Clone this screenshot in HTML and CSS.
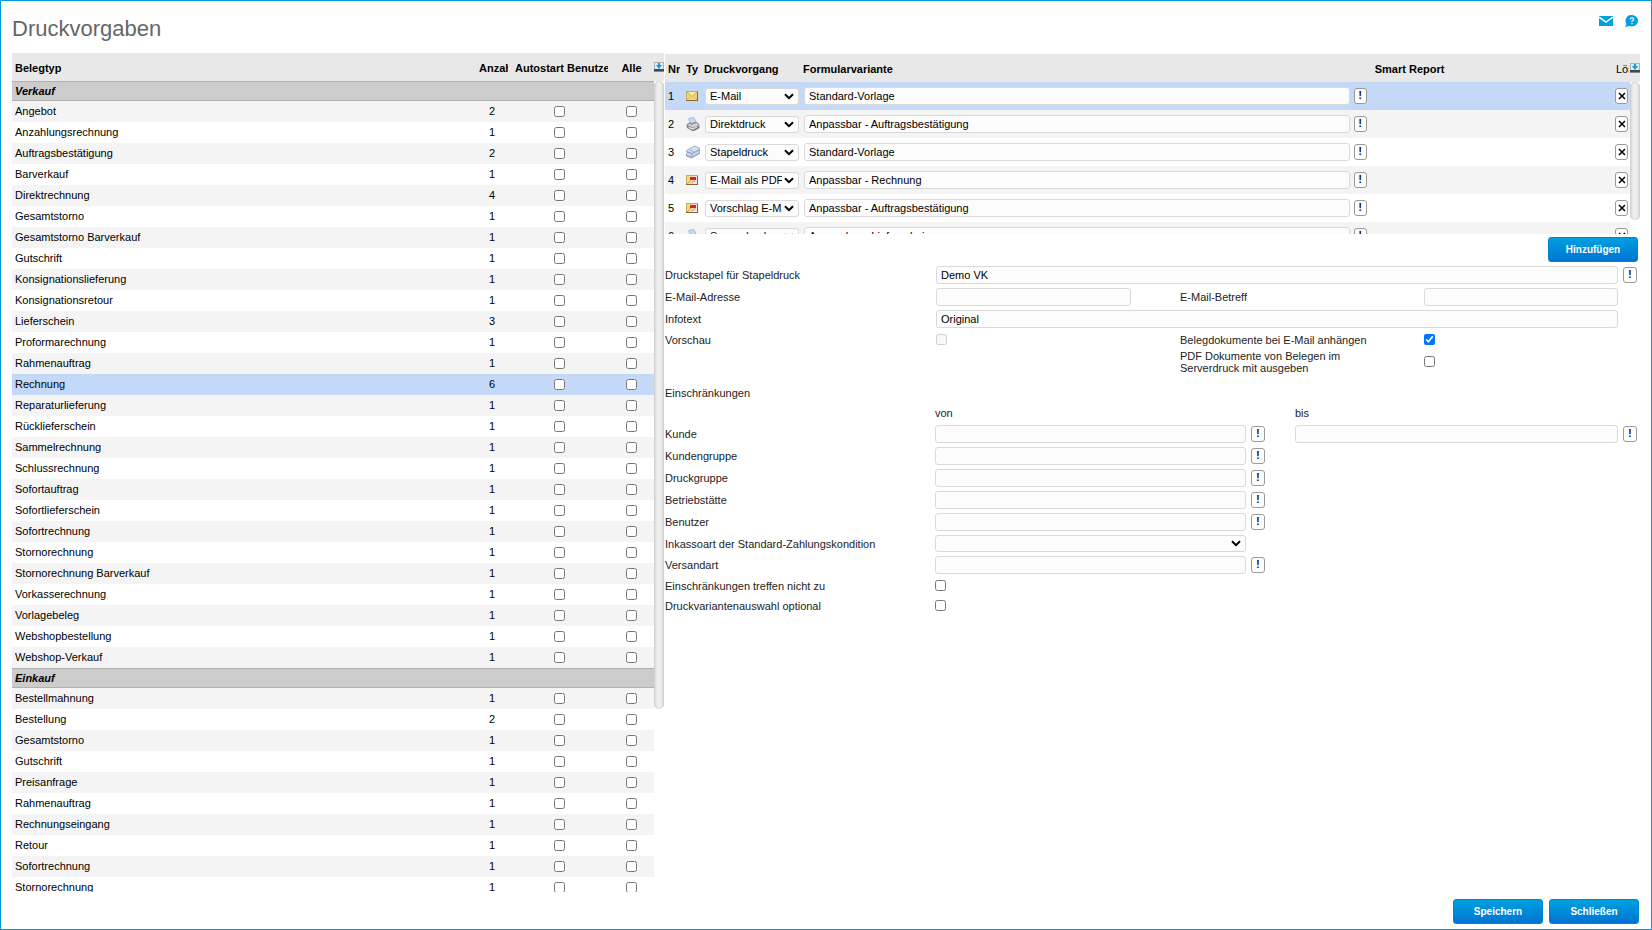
FILE: index.html
```html
<!DOCTYPE html>
<html lang="de">
<head>
<meta charset="utf-8">
<title>Druckvorgaben</title>
<link rel="stylesheet" href="styles.css">
</head>
<body>
<svg class="sprite" aria-hidden="true">
  <symbol id="i-export" viewBox="0 0 10 10">
    <rect width="10" height="10" fill="#a9b4ba"/>
    <rect x="1" y="1" width="8" height="6" fill="#d9eef8"/>
    <rect y="7" width="10" height="2" fill="#3f4a52"/>
    <rect y="9" width="10" height="1" fill="#7d878d"/>
    <path d="M4 1h2v2h2L5 7 2 3h2z" fill="#1c9ad6"/>
  </symbol>
  <symbol id="i-letter" viewBox="0 0 12 12">
    <rect x=".5" y="1.5" width="11" height="9" fill="#f0d670" stroke="#c8ab58"/>
    <path d="M1 2l5 4.500 5-4.500" fill="#faeaa0" stroke="#cfb155"/>
    <path d="M1 10l3.500-4M11 10L7.500 6" stroke="#e0c468" fill="none"/>
    <path d="M0 10.500h12M11.500 2v9" stroke="#80683a" fill="none"/>
  </symbol>
  <symbol id="i-printer" viewBox="0 0 14 14">
    <path d="M2.500 1.500L8 .5l2 5-5 2z" fill="#c3dcf6" stroke="#8fabc8" stroke-width=".7"/>
    <path d="M1 7.500l3-2 1 1.500 5-2 3 2.500v3.500l-6 3-6-3.500z" fill="#98999c" stroke="#737578" stroke-width=".7"/>
    <path d="M1.500 8l5.500 2.500 6-2.500-3-2-4.500 2L4 6.500z" fill="#d0d1d3"/>
    <path d="M3 10.500l4 1.500 4-2" fill="none" stroke="#f4f4f4"/>
    <path d="M7 13.500l6-3" fill="none" stroke="#67696c" stroke-width=".8"/>
  </symbol>
  <symbol id="i-stack" viewBox="0 0 14 14">
    <path d="M.5 8l8-4.500 5 1.500v3.500l-8 4.500-5-2z" fill="#a9bbdb" stroke="#7387ad" stroke-width=".7"/>
    <path d="M.5 5.500l8-4.500 5 2v1.500L6 8.500l-5.500-2z" fill="#d3e1f5" stroke="#7c91b8" stroke-width=".7"/>
    <path d="M.5 8.500l5.500 2 7.500-4" fill="none" stroke="#eef4fc" stroke-width=".9"/>
    <path d="M3.500 5l5 2M6 8.500v4" stroke="#8a9dc2" stroke-width=".8"/>
  </symbol>
  <symbol id="i-pdf" viewBox="0 0 12 12">
    <rect x=".5" y="1.500" width="11" height="9" fill="#f3dc88" stroke="#c8ab58"/>
    <path d="M1 10l4-4" stroke="#c9a94e"/>
    <rect x="6" y="2" width="5" height="8" fill="#f3e6e0"/>
    <path d="M4 3h6v3H4z" fill="#d8281c"/>
    <path d="M6 9l1.500-2h2" stroke="#d97a6c" fill="none"/>
    <path d="M0 10.500h12M11.500 2v9" stroke="#80683a" fill="none"/>
  </symbol>
  <symbol id="i-x" viewBox="0 0 8 8">
    <path d="M1 1l6 6M7 1L1 7" stroke="#000" stroke-width="1.500"/>
  </symbol>
</svg>

<div class="page">
  <header class="top">
    <h1>Druckvorgaben</h1>
    <nav class="tools">
      <a href="#" aria-label="E-Mail"><svg width="14" height="10" viewBox="0 0 14 10"><rect width="14" height="10" fill="#009fe3"/><path d="M0 1l7 5 7-5" fill="none" stroke="#fff" stroke-width="1.500"/></svg></a>
      <a href="#" aria-label="Hilfe"><svg width="13" height="12" viewBox="0 0 13 12"><path d="M7 0a6 5.700 0 0 1 0 11.400Q5.500 11.400 4.500 11L0 12l1.500-3A5.800 5.800 0 0 1 7 0z" fill="#009fe3"/><path d="M5.200 4.300Q5.300 2.800 7 2.800T8.700 4.300Q8.700 5.200 7 6.300v.8M7 8v1.300" fill="none" stroke="#fff" stroke-width="1.300"/></svg></a>
    </nav>
  </header>

  <main class="main">
    <section class="list docs">
      <div class="viewport">
        <table id="docs">
          <colgroup><col><col class="c-count"><col class="c-auto"><col class="c-all"></colgroup>
          <thead><tr><th><span>Belegtyp</span></th><th class="h-count"><span>Anzahl</span></th><th class="h-auto"><span>Autostart Benutzer</span></th><th class="h-all"><span>Alle</span></th></tr></thead>
        </table>
      </div>
      <div class="rail"><div class="rail-head"><svg width="10" height="10"><use href="#i-export"/></svg></div><div class="track"><div class="thumb docs-thumb"></div></div></div>
    </section>

    <section class="detail">
      <div class="list variants">
        <div class="viewport">
          <table>
            <colgroup><col class="c-nr"><col class="c-nr"><col class="c-job"><col><col class="c-smart"><col class="c-nr"></colgroup>
            <thead><tr><th><span>Nr.</span></th><th><span>Typ</span></th><th><span>Druckvorgang</span></th><th><span>Formularvariante</span></th><th class="h-smart"><span>Smart Report</span></th><th class="h-del"><span>Löschen</span></th></tr></thead>
            <tbody>
              <tr class="selected"><td>1</td><td><svg width="12" height="12"><use href="#i-letter"/></svg></td><td><select aria-label="Druckvorgang 1"><option>E-Mail</option></select></td><td><div class="pick"><input type="text" aria-label="Formularvariante 1" value="Standard-Vorlage"><button class="mini">!</button></div></td><td></td><td><button class="mini" aria-label="Löschen 1"><svg width="8" height="8"><use href="#i-x"/></svg></button></td></tr>
              <tr><td>2</td><td><svg width="14" height="14"><use href="#i-printer"/></svg></td><td><select aria-label="Druckvorgang 2"><option>Direktdruck</option></select></td><td><div class="pick"><input type="text" aria-label="Formularvariante 2" value="Anpassbar - Auftragsbestätigung"><button class="mini">!</button></div></td><td></td><td><button class="mini" aria-label="Löschen 2"><svg width="8" height="8"><use href="#i-x"/></svg></button></td></tr>
              <tr><td>3</td><td><svg width="14" height="14"><use href="#i-stack"/></svg></td><td><select aria-label="Druckvorgang 3"><option>Stapeldruck</option></select></td><td><div class="pick"><input type="text" aria-label="Formularvariante 3" value="Standard-Vorlage"><button class="mini">!</button></div></td><td></td><td><button class="mini" aria-label="Löschen 3"><svg width="8" height="8"><use href="#i-x"/></svg></button></td></tr>
              <tr><td>4</td><td><svg width="12" height="12"><use href="#i-pdf"/></svg></td><td><select aria-label="Druckvorgang 4"><option>E-Mail als PDF</option></select></td><td><div class="pick"><input type="text" aria-label="Formularvariante 4" value="Anpassbar - Rechnung"><button class="mini">!</button></div></td><td></td><td><button class="mini" aria-label="Löschen 4"><svg width="8" height="8"><use href="#i-x"/></svg></button></td></tr>
              <tr><td>5</td><td><svg width="12" height="12"><use href="#i-pdf"/></svg></td><td><select aria-label="Druckvorgang 5"><option>Vorschlag E-Mail</option></select></td><td><div class="pick"><input type="text" aria-label="Formularvariante 5" value="Anpassbar - Auftragsbestätigung"><button class="mini">!</button></div></td><td></td><td><button class="mini" aria-label="Löschen 5"><svg width="8" height="8"><use href="#i-x"/></svg></button></td></tr>
              <tr><td>6</td><td><svg width="14" height="14"><use href="#i-printer"/></svg></td><td><select aria-label="Druckvorgang 6"><option>Serverdruck</option></select></td><td><div class="pick"><input type="text" aria-label="Formularvariante 6" value="Anpassbar - Lieferschein"><button class="mini">!</button></div></td><td></td><td><button class="mini" aria-label="Löschen 6"><svg width="8" height="8"><use href="#i-x"/></svg></button></td></tr>
            </tbody>
          </table>
        </div>
        <div class="rail"><div class="rail-head"><svg width="10" height="10"><use href="#i-export"/></svg></div><div class="track"><div class="thumb variants-thumb"></div></div></div>
      </div>

      <div class="add"><button class="primary">Hinzufügen</button></div>

      <form class="form">
        <div class="row">
          <label for="stapel">Druckstapel für Stapeldruck</label><input class="wide" type="text" id="stapel" value="Demo VK"><button type="button" class="mini big">!</button>
        </div>
        <div class="row">
          <label for="mail">E-Mail-Adresse</label><input class="part" type="text" id="mail"><label for="betreff">E-Mail-Betreff</label><input type="text" id="betreff">
        </div>
        <div class="row">
          <label for="info">Infotext</label><input class="wide" type="text" id="info" value="Original">
        </div>
        <div class="row low">
          <label for="vorschau">Vorschau</label><input type="checkbox" id="vorschau" disabled><label for="anh">Belegdokumente bei E-Mail anhängen</label><input type="checkbox" id="anh" checked>
        </div>
        <div class="row">
          <label class="third" for="pdf">PDF Dokumente von Belegen im<br>Serverdruck mit ausgeben</label><input type="checkbox" id="pdf">
        </div>
        <h2>Einschränkungen</h2>
        <div class="range low"><span class="von">von</span><span class="bis">bis</span></div>
        <div class="range"><label for="kunde">Kunde</label><input type="text" id="kunde"><button type="button" class="mini big">!</button><input type="text" aria-label="Kunde bis"><button type="button" class="mini big">!</button></div>
        <div class="range"><label for="kgruppe">Kundengruppe</label><input type="text" id="kgruppe"><button type="button" class="mini big">!</button></div>
        <div class="range"><label for="dgruppe">Druckgruppe</label><input type="text" id="dgruppe"><button type="button" class="mini big">!</button></div>
        <div class="range"><label for="betrieb">Betriebstätte</label><input type="text" id="betrieb"><button type="button" class="mini big">!</button></div>
        <div class="range"><label for="benutzer">Benutzer</label><input type="text" id="benutzer"><button type="button" class="mini big">!</button></div>
        <div class="range mid-low"><label for="inkasso">Inkassoart der Standard-Zahlungskondition</label><select id="inkasso"><option></option></select></div>
        <div class="range"><label for="versand">Versandart</label><input type="text" id="versand"><button type="button" class="mini big">!</button></div>
        <div class="range low"><label for="nicht">Einschränkungen treffen nicht zu</label><input type="checkbox" id="nicht"></div>
        <div class="range low"><label for="opt">Druckvariantenauswahl optional</label><input type="checkbox" id="opt"></div>
      </form>
    </section>
  </main>

  <footer class="bottom">
    <button class="primary">Speichern</button>
    <button class="primary">Schließen</button>
  </footer>
</div>
<script src="docs.js"></script>
</body>
</html>
```
FILE: styles.css
```css
* { box-sizing: border-box; }

body {
  margin: 0;
  background: #fff;
  color: #000;
  font: 11px/12px "Liberation Sans", Arial, sans-serif;
}

input, select, button { font: inherit; color: #000; margin: 0; }
.sprite { position: absolute; width: 0; height: 0; }

.page {
  display: flex;
  flex-direction: column;
  height: 100vh;
  padding: 0 11px 5px;
  border: 1px solid #009ddb;
  overflow: hidden;
}

.top {
  display: flex;
  justify-content: space-between;
  height: 52px;
  flex: none;
}
h1 { margin: 15px 0 0; font-size: 22px; line-height: 26px; font-weight: normal; color: #666; }
.tools { display: flex; align-items: center; gap: 12px; height: 40px; padding-right: 2px; }
.tools svg { display: block; }

.main { display: flex; flex: 1; min-height: 0; gap: 1px; }

.list { display: flex; min-height: 0; }
.viewport { flex: 1; min-width: 0; overflow: hidden; }
.docs { flex: 652; min-width: 0; }
.detail { flex: 975; min-width: 0; padding-top: 1px; }
.variants { height: 180px; }

table { width: 100%; table-layout: fixed; border-collapse: separate; border-spacing: 0; }
th, td { padding: 0 3px; text-align: left; white-space: nowrap; }
th { height: 28px; padding-top: 2px; background: #e8e8e8; }
th span { display: block; overflow: hidden; }
.mid, .h-all { text-align: center; }
.mid input { display: block; margin: 0 auto; }

.docs td { height: 21px; padding-bottom: 2px; }
.docs td.box { padding-bottom: 0; }
.docs tbody tr { background: #f4f4f4; }
.docs tbody tr:nth-child(odd) { background: #fff; }
.docs tbody .group td {
  height: 20px;
  padding-bottom: 0;
  background: #ccc;
  border: solid #b0b0b0;
  border-width: 1px 0;
  font-weight: bold;
  font-style: italic;
}
.c-count { width: 32px; }
.c-auto { width: 103px; }
.c-all { width: 43px; }
th.h-count { padding-right: 0; }
th.h-auto { padding-left: 7px; padding-right: 3px; }
th.h-all, .docs td.box:last-child { padding-left: 2px; padding-right: 4px; }

.c-nr { width: 18px; }
.c-job { width: 99px; }
.c-smart { width: 25%; }
.variants td { height: 28px; }
.variants tbody tr:nth-child(even) { background: #f4f4f4; }
.variants td svg { display: block; }
.variants td:nth-child(3) { padding-left: 4px; }
.variants td:nth-child(4) { padding-left: 4px; padding-right: 4px; }
.variants td select { display: block; width: 94px; }
th.h-smart { padding-left: 4px; }
th.h-del { padding-left: 4px; padding-right: 1px; font-weight: normal; }
.pick { display: flex; align-items: center; gap: 4px; }
.pick input { flex: 1; min-width: 0; }

.docs tbody tr.selected, .variants tbody tr.selected { background: #c4d9f8; }

.rail { display: flex; flex-direction: column; width: 10px; flex: none; }
.rail-head { display: flex; align-items: center; height: 28px; background: #e8e8e8; }
.track { flex: 1; }
.thumb {
  border-radius: 5px;
  background: linear-gradient(90deg, #d6d6d6, #eee 35%, #eee 65%, #d6d6d6);
  box-shadow: inset 0 0 2px #bbb;
}
.docs-thumb { height: 77.4%; }
.variants-thumb { height: 91%; }

input[type="text"], select {
  height: 18px;
  padding: 0 4px;
  border: 1px solid #d9d9d9;
  border-radius: 3px;
  background: #fcfcfc;
}
select {
  appearance: none;
  height: 17px;
  padding: 0 16px 0 4px;
  background: #fcfcfc url("data:image/svg+xml,%3Csvg xmlns='http://www.w3.org/2000/svg' width='10' height='7'%3E%3Cpath d='M1 1.200l4 4 4-4' fill='none' stroke='%23000' stroke-width='2'/%3E%3C/svg%3E") no-repeat right 4px center;
}
input[type="checkbox"] { width: 11px; height: 11px; }

.mini {
  display: flex;
  align-items: center;
  justify-content: center;
  width: 13px;
  height: 16px;
  padding: 0;
  border: 1px solid #999;
  border-radius: 3px;
  background: #fff;
  font-size: 10px;
  font-weight: bold;
}
.big { width: 14px; margin-left: 5px; }

.primary {
  width: 90px;
  height: 25px;
  padding: 0;
  border: 1px solid #0083cc;
  border-radius: 3px;
  background: linear-gradient(#00a0de, #0074d4);
  color: #fff;
  font-size: 10px;
  font-weight: bold;
}
.add { display: flex; justify-content: flex-end; padding: 3px 2px 2px 0; }

.form { color: #222; }
.row, .range { display: grid; align-items: center; min-height: 22px; }
.row { grid-template-columns: 271fr 244fr 244fr 194fr 22px; }
.range { grid-template-columns: 270fr 311fr 49fr 323fr 22px; }
.row.low, .range.low { min-height: 20px; }
.range.mid-low { min-height: 21px; }
.row > *, .range > * { min-width: 0; }
.row input[type="checkbox"], .range input[type="checkbox"] { margin-bottom: 2px; }
.wide { grid-column: span 3; }
.part { width: 80%; }
.third { grid-column: 3; }
.von { grid-column: 2; }
.bis { grid-column: 4; }
h2 { margin: 9px 0 0; font-size: 11px; line-height: 20px; font-weight: normal; }

.bottom { display: flex; justify-content: flex-end; gap: 6px; padding: 7px 1px 0; flex: none; }
```
FILE: docs.js
```js
const groups = [
  ["Verkauf", [
    ["Angebot", 2], ["Anzahlungsrechnung", 1], ["Auftragsbestätigung", 2], ["Barverkauf", 1],
    ["Direktrechnung", 4], ["Gesamtstorno", 1], ["Gesamtstorno Barverkauf", 1], ["Gutschrift", 1],
    ["Konsignationslieferung", 1], ["Konsignationsretour", 1], ["Lieferschein", 3],
    ["Proformarechnung", 1], ["Rahmenauftrag", 1], ["Rechnung", 6], ["Reparaturlieferung", 1],
    ["Rücklieferschein", 1], ["Sammelrechnung", 1], ["Schlussrechnung", 1], ["Sofortauftrag", 1],
    ["Sofortlieferschein", 1], ["Sofortrechnung", 1], ["Stornorechnung", 1],
    ["Stornorechnung Barverkauf", 1], ["Vorkasserechnung", 1], ["Vorlagebeleg", 1],
    ["Webshopbestellung", 1], ["Webshop-Verkauf", 1]
  ]],
  ["Einkauf", [
    ["Bestellmahnung", 1], ["Bestellung", 2], ["Gesamtstorno", 1], ["Gutschrift", 1],
    ["Preisanfrage", 1], ["Rahmenauftrag", 1], ["Rechnungseingang", 1], ["Retour", 1],
    ["Sofortrechnung", 1], ["Stornorechnung", 1]
  ]]
];

document.getElementById("docs").insertAdjacentHTML("beforeend", groups.map(([title, docs]) =>
  `<tbody><tr class="group"><td colspan="4">${title}</td></tr>` +
  docs.map(([name, count]) =>
    `<tr${name === "Rechnung" ? ' class="selected"' : ""}><td>${name}</td><td class="mid">${count}</td>` +
    `<td class="mid box"><input type="checkbox" aria-label="Autostart Benutzer: ${name}"></td>` +
    `<td class="mid box"><input type="checkbox" aria-label="Alle: ${name}"></td></tr>`
  ).join("") + "</tbody>"
).join(""));
```
